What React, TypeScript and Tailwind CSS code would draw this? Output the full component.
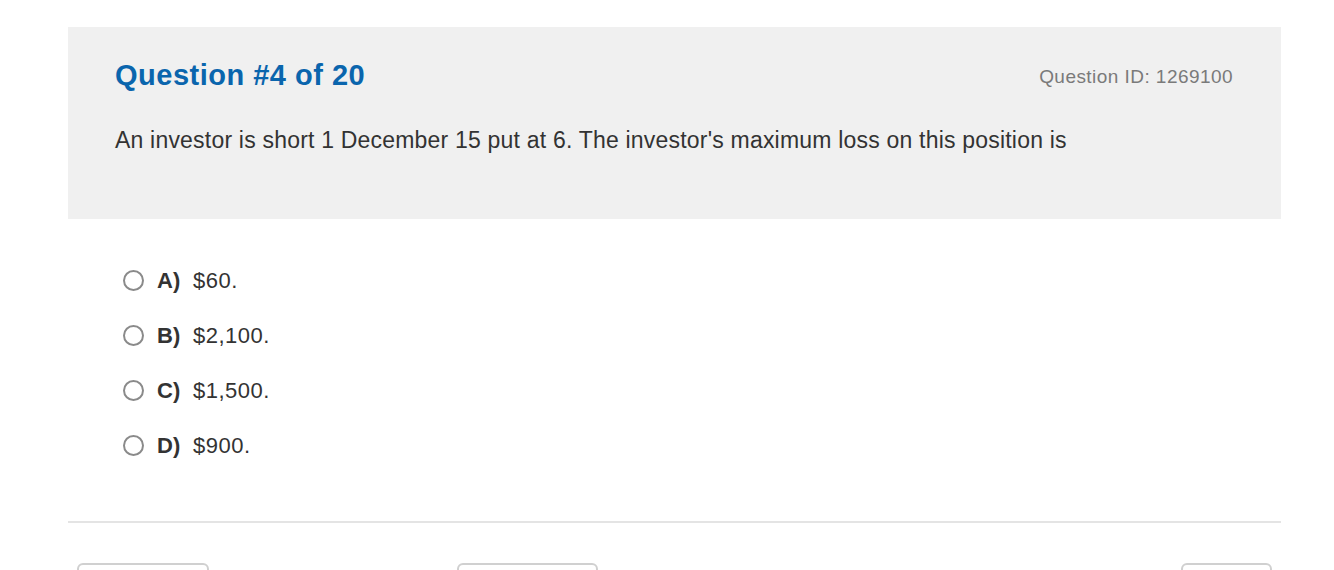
import React from "react";

const OPTIONS = [
  { key: "A)", value: "$60." },
  { key: "B)", value: "$2,100." },
  { key: "C)", value: "$1,500." },
  { key: "D)", value: "$900." },
];

export default function App() {
  return (
    <main
      className="h-[570px] w-full overflow-hidden bg-white pl-[68px] pr-[53px] pt-[27px] text-[#333]"
      style={{ fontFamily: '"Liberation Sans", Arial, sans-serif' }}
    >
      {/* Question header */}
      <section className="h-[192px] bg-[#f0f0f0] pl-[47px] pr-[48px] pt-[30px]">
        <div className="flex items-center justify-between">
          <h1 className="text-[29px] font-bold leading-[36px] tracking-[0.5px] text-[#0a65ad]">
            Question #4 of 20
          </h1>
          <span className="mt-[4px] text-[19px] tracking-[0.45px] text-[#7a7a7a]">
            Question ID: 1269100
          </span>
        </div>
        <p className="mt-[32px] text-[23px] leading-[30px] tracking-[0.2px] text-[#333]">
          An investor is short 1 December 15 put at 6. The investor's maximum loss on this
          position is
        </p>
      </section>

      {/* Answers */}
      <ul className="flex flex-col gap-[31px] pl-[55px] pt-[49px]">
        {OPTIONS.map((o) => (
          <li key={o.key} className="flex h-[24px] items-center">
            <span className="h-[21px] w-[21px] shrink-0 rounded-full border-2 border-[#8a8a8a] bg-white" />
            <span className="ml-[13px] w-[36px] text-[22px] font-bold text-[#333]">{o.key}</span>
            <span className="text-[22px] tracking-[0.5px] text-[#333]">{o.value}</span>
          </li>
        ))}
      </ul>

      {/* Footer */}
      <div className="mt-[64px] border-t-2 border-[#e4e4e4]" />
      <div className="mt-[40px] flex">
        <div className="ml-[9px] h-[40px] w-[132px] rounded-md border-2 border-[#d0d0d0]" />
        <div className="ml-[248px] h-[40px] w-[141px] rounded-md border-2 border-[#d0d0d0]" />
        <div className="ml-auto mr-[9px] h-[40px] w-[91px] rounded-md border-2 border-[#d0d0d0]" />
      </div>
    </main>
  );
}
